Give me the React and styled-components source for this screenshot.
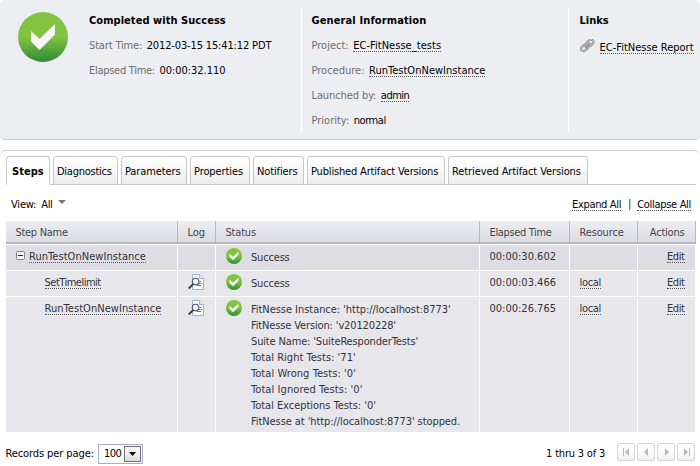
import React from 'react';
import styled, { createGlobalStyle } from 'styled-components';

const Global = createGlobalStyle`
  * { box-sizing: border-box; }
  body { margin: 0; background: #fff; }
  body, button {
    font: condensed 11px/13px "DejaVu Sans", "DejaVu Sans Condensed", Tahoma, sans-serif;
    color: #000;
  }
`;

const Page = styled.div`
  width: 700px;
  height: 466px;
  overflow: hidden;
`;

const Text = styled.span`
  letter-spacing: ${(p) => p.$ls ?? 0}px;
  white-space: nowrap;
`;

const Link = styled.a`
  display: inline-block;
  height: 13px;
  border-bottom: 1px dotted #555;
  letter-spacing: ${(p) => p.$ls ?? 0}px;
  white-space: nowrap;
  cursor: pointer;
`;

/* Summary panel */
const Summary = styled.header`
  display: grid;
  grid-template-columns: 301px 267px 1fr;
  height: 140px;
  padding-top: 7px;
  background: #edeef2;
  border-bottom: 1px solid #cdcdcf;
  border-radius: 5px;
`;

const SummaryCol = styled.section`
  display: flex;
  gap: 21px;
  height: 125px;
  padding: 1px 0 0 ${(p) => p.$pad}px;
  border-left: ${(p) => (p.$divided ? '1px solid #fff' : '0')};
`;

const BadgeSlot = styled.div`
  padding-top: 4px;
  line-height: 0;
`;

const Fields = styled.div`
  line-height: 25px;
`;

const Heading = styled.h2`
  margin: 0;
  font-size: 11px;
  font-weight: bold;
  line-height: 25px;
  letter-spacing: ${(p) => p.$ls ?? 0}px;
  white-space: nowrap;
`;

const Field = styled.div`
  display: flex;
  align-items: center;
  height: 25px;
  line-height: 13px;
  gap: 4.5px;
`;

const Label = styled(Text)`
  color: #6d6d70;
`;

const ReportRow = styled.div`
  display: flex;
  align-items: center;
  gap: 4px;
  height: 28px;
  line-height: 13px;
`;

/* Job details */
const Details = styled.main`
  margin-top: 10px;
  padding: 5px 4px 0 6px;
  border-top: 1px solid #cbcbcb;
  border-radius: 6px;
`;

const Tabs = styled.nav`
  display: flex;
  gap: 3px;
  height: 29px;
  background: linear-gradient(#c8c8c8, #c8c8c8) left bottom / 100% 1px no-repeat;
`;

const Tab = styled.button`
  width: ${(p) => p.$w}px;
  height: 29px;
  padding: 2px 0 0 ${(p) => (p.$active ? 5 : 3)}px;
  text-align: left;
  border: 1px solid #c8c8c8;
  border-bottom-color: ${(p) => (p.$active ? '#fff' : '#c8c8c8')};
  border-radius: 3px 3px 0 0;
  background: ${(p) => (p.$active ? '#fff' : 'linear-gradient(#fff, #f8f8f8 45%, #ececec)')};
  font-weight: ${(p) => (p.$active ? 'bold' : 'normal')};
`;

const Toolbar = styled.div`
  display: flex;
  align-items: center;
  height: 36px;
  padding: 3px 5px 0 5px;
`;

const ViewMenu = styled.div`
  display: flex;
  align-items: center;
  gap: 5px;
  flex: 1;
`;

const Caret = styled.svg`
  margin-top: -5px;
`;

const Separator = styled.i`
  width: 2px;
  height: 11px;
  margin: -1px 6px 0 8px;
  background: linear-gradient(90deg, #3b8cc8 50%, #a5d3ea 50%);
`;

const gridColumns = '172px 38px 264px 90px 68px 58px';

const HeaderRow = styled.div`
  display: grid;
  grid-template-columns: ${gridColumns};
  height: 23px;
  border-bottom: 2px solid #b7b8c0;
  background: linear-gradient(#eceef1, #dadce3);
  color: #45454b;
`;

const HeaderCell = styled.div`
  padding: 5px ${(p) => (p.$right ? 10.5 : 0)}px 0 9.5px;
  border-right: 1px solid #b7b8c0;
  text-align: ${(p) => (p.$right ? 'right' : 'left')};
`;

const Row = styled.div`
  display: grid;
  grid-template-columns: ${gridColumns};
  height: ${(p) => p.$h}px;
  margin-top: 1px;
  background: ${(p) => (p.$parent ? '#dedde3' : '#e7e6eb')};
  color: #333338;
`;

const Cell = styled.div`
  display: flex;
  align-items: flex-start;
  justify-content: ${(p) => (p.$right ? 'flex-end' : 'flex-start')};
  padding: 5px ${(p) => (p.$right ? 10.5 : 0)}px 0 ${(p) => p.$pad ?? 9.5}px;
  border-right: 1px solid #fff;
`;

const IconCell = styled(Cell)`
  padding-top: 3px;
  gap: 9px;
`;

const Messages = styled.div`
  padding-top: 2px;
  line-height: 16px;
`;

const Message = styled.div`
  letter-spacing: ${(p) => p.$ls ?? 0}px;
  white-space: nowrap;
`;

const Toggle = styled.svg`
  margin: 1px 4px 0 0;
`;

/* Paging */
const Footer = styled.footer`
  display: flex;
  align-items: center;
  height: 20px;
  margin: 11px 5px 0 5.5px;
`;

const Select = styled.div`
  display: flex;
  align-items: center;
  justify-content: space-between;
  width: 45px;
  height: 20px;
  margin: 1px auto 0 4px;
  padding: 1px 1px 1px 5px;
  border: 1px solid #a9adc9;
`;

const SelectButton = styled.span`
  display: flex;
  align-items: center;
  justify-content: center;
  width: 17px;
  height: 16px;
  border: 1px solid #707070;
  background: linear-gradient(#f4f4f4 45%, #d8d8d8);
`;

const Pager = styled.div`
  display: flex;
  gap: 2px;
  margin: -2px 0 0 12px;
`;

const PagerButton = styled.button`
  display: flex;
  align-items: center;
  justify-content: center;
  width: 18px;
  height: 18px;
  padding: 0;
  border: 1px solid #d6d6d6;
  border-radius: 2px;
  background: linear-gradient(#fefefe 40%, #f0f0f0);
`;

function Badge({ size, small }) {
  const id = small ? 'okSmall' : 'okLarge';
  return (
    <svg width={size} height={size} viewBox="0 0 50 50">
      <defs>
        <linearGradient id={id} x1="0" y1="0" x2="0" y2="1">
          <stop offset="0" stopColor="#82c341" />
          <stop offset="0.5" stopColor="#82c341" />
          <stop offset="1" stopColor="#2f8a37" />
        </linearGradient>
      </defs>
      <circle cx="25" cy="25" r="25" fill={`url(#${id})`} />
      <path
        d={small ? 'M11 18L22 27L39 11V21L22 38L11 28Z' : 'M13 19L21.5 27L37 12V22.5L21.5 38L13 29.5Z'}
        fill="#f7f7f7"
      />
    </svg>
  );
}

function LinkIcon() {
  return (
    <svg width="16" height="16" viewBox="0 0 16 16" fill="none">
      <g transform="translate(-0.8 -1.6) rotate(-42 8 8)">
        <rect x="0.6" y="5.6" width="7.6" height="4.8" rx="2.4" stroke="#858585" strokeWidth="2.2" />
        <rect x="0.6" y="5.6" width="7.6" height="4.8" rx="2.4" stroke="#d2d2d2" strokeWidth="0.9" />
        <rect x="8" y="5.6" width="7.4" height="4.8" rx="2.4" stroke="#858585" strokeWidth="2.2" />
        <rect x="8" y="5.6" width="7.4" height="4.8" rx="2.4" stroke="#dadada" strokeWidth="0.9" />
        <path d="M5 8H11.5" stroke="#777" strokeWidth="2" />
        <path d="M5.5 7.8H11" stroke="#ddd" strokeWidth="0.8" />
      </g>
    </svg>
  );
}

function LogIcon() {
  return (
    <svg width="16" height="16" viewBox="0 0 16 16" fill="none">
      <path d="M4.5 0.5H11.5L15.5 4.5V15.5H4.5Z" fill="#f8faff" stroke="#9db1dc" />
      <path d="M11.5 0.5V4.5H15.5" fill="#dfe8f8" stroke="#9db1dc" />
      <path d="M11 9.5H12.5M9 11.5H13" stroke="#21a332" />
      <path d="M11.5 7.5H13M13 9.5H14" stroke="#d43c32" />
      <circle cx="7.6" cy="7.6" r="3.3" fill="#eef3fb" stroke="#55555a" strokeWidth="1.1" />
      <path d="M5.2 10L0.7 14.5" stroke="#3a3a3e" strokeWidth="1.8" />
    </svg>
  );
}

function ToggleIcon() {
  return (
    <Toggle width="9" height="9" viewBox="0 0 9 9">
      <rect x="0.5" y="0.5" width="8" height="8" rx="1" fill="#f6f6f4" stroke="#7d8590" />
      <path d="M2 4.5H7" stroke="#222" />
    </Toggle>
  );
}

const pagerShapes = [
  'M4 3H5V11H4ZM10 3V11L6 7Z',
  'M9 3V11L5 7Z',
  'M6 3V11L10 7Z',
  'M10 3H11V11H10ZM5 3V11L9 7Z',
];

const tabs = [
  ['Steps', 44, 0.05],
  ['Diagnostics', 65, -0.25],
  ['Parameters', 66, -0.1],
  ['Properties', 60, -0.1],
  ['Notifiers', 51, -0.12],
  ['Published Artifact Versions', 138, -0.17],
  ['Retrieved Artifact Versions', 140, -0.1],
];

const steps = [
  { name: 'RunTestOnNewInstance', ls: 0.05, parent: true, h: 25, time: '00:00:30.602', messages: [['Success', -0.18]] },
  { name: 'SetTimelimit', ls: -0.5, h: 25, time: '00:00:03.466', resource: 'local', messages: [['Success', -0.18]] },
  {
    name: 'RunTestOnNewInstance',
    ls: 0.05,
    h: 135,
    time: '00:00:26.765',
    resource: 'local',
    messages: [
      ["FitNesse Instance: 'http://localhost:8773'", -0.05],
      ["FitNesse Version: 'v20120228'", -0.14],
      ["Suite Name: 'SuiteResponderTests'", -0.15],
      ["Total Right Tests: '71'", 0.02],
      ["Total Wrong Tests: '0'", 0.06],
      ["Total Ignored Tests: '0'", 0.08],
      ["Total Exceptions Tests: '0'", -0.03],
      ["FitNesse at 'http://localhost:8773' stopped.", -0.08],
    ],
  },
];

export default function App() {
  return (
    <Page>
      <Global />
      <Summary>
        <SummaryCol $pad={18}>
          <BadgeSlot><Badge size={50} /></BadgeSlot>
          <Fields>
            <Heading $ls={0.05}>Completed with Success</Heading>
            <Field><Label $ls={-0.15}>Start Time:</Label><Text $ls={-0.14}>2012-03-15 15:41:12 PDT</Text></Field>
            <Field><Label $ls={-0.28}>Elapsed Time:</Label><Text $ls={-0.04}>00:00:32.110</Text></Field>
          </Fields>
        </SummaryCol>
        <SummaryCol $pad={9.5} $divided>
          <Fields>
            <Heading $ls={0.12}>General Information</Heading>
            <Field><Label>Project:</Label><Link $ls={0.04}>EC-FitNesse_tests</Link></Field>
            <Field><Label>Procedure:</Label><Link $ls={0.02}>RunTestOnNewInstance</Link></Field>
            <Field><Label $ls={-0.1}>Launched by:</Label><Link $ls={-0.5}>admin</Link></Field>
            <Field><Label>Priority:</Label><Text $ls={-0.45}>normal</Text></Field>
          </Fields>
        </SummaryCol>
        <SummaryCol $pad={10.5} $divided>
          <Fields>
            <Heading>Links</Heading>
            <ReportRow><LinkIcon /><Link>EC-FitNesse Report</Link></ReportRow>
          </Fields>
        </SummaryCol>
      </Summary>

      <Details>
        <Tabs>
          {tabs.map(([name, w, ls], i) => (
            <Tab key={name} $w={w} $active={i === 0}><Text $ls={ls}>{name}</Text></Tab>
          ))}
        </Tabs>
        <Toolbar>
          <ViewMenu>
            <Text $ls={-0.2}>View:</Text>
            <Text $ls={-0.3}>All</Text>
            <Caret width="8" height="4" viewBox="0 0 8 4"><path d="M0 0H8L4 4Z" fill="#777" /></Caret>
          </ViewMenu>
          <Link $ls={-0.33}>Expand All</Link>
          <Separator />
          <Link $ls={-0.3}>Collapse All</Link>
        </Toolbar>

        <HeaderRow>
          <HeaderCell><Text $ls={-0.3}>Step Name</Text></HeaderCell>
          <HeaderCell><Text>Log</Text></HeaderCell>
          <HeaderCell><Text $ls={-0.2}>Status</Text></HeaderCell>
          <HeaderCell><Text $ls={-0.35}>Elapsed Time</Text></HeaderCell>
          <HeaderCell><Text $ls={-0.15}>Resource</Text></HeaderCell>
          <HeaderCell $right><Text $ls={-0.2}>Actions</Text></HeaderCell>
        </HeaderRow>
        {steps.map((s, i) => (
          <Row key={i} $h={s.h} $parent={s.parent}>
            <Cell $pad={s.parent ? 10 : 38.5}>
              {s.parent && <ToggleIcon />}
              <Link $ls={s.ls}>{s.name}</Link>
            </Cell>
            <IconCell $pad={10}>{!s.parent && <LogIcon />}</IconCell>
            <IconCell $pad={10}>
              <Badge size={16} small />
              <Messages>
                {s.messages.map(([text, ls]) => <Message key={text} $ls={ls}>{text}</Message>)}
              </Messages>
            </IconCell>
            <Cell><Text>{s.time}</Text></Cell>
            <Cell>{s.resource && <Link $ls={-0.3}>{s.resource}</Link>}</Cell>
            <Cell $right><Link $ls={-0.4}>Edit</Link></Cell>
          </Row>
        ))}
      </Details>

      <Footer>
        <Text $ls={-0.1}>Records per page:</Text>
        <Select>
          <Text $ls={-0.5}>100</Text>
          <SelectButton>
            <svg width="7" height="4" viewBox="0 0 7 4"><path d="M0 0H7L3.5 4Z" fill="#000" /></svg>
          </SelectButton>
        </Select>
        <Text $ls={-0.2}>1 thru 3 of 3</Text>
        <Pager>
          {pagerShapes.map((d) => (
            <PagerButton key={d}>
              <svg width="14" height="14" viewBox="0 0 14 14"><path d={d} fill="#b9b9b9" /></svg>
            </PagerButton>
          ))}
        </Pager>
      </Footer>
    </Page>
  );
}
